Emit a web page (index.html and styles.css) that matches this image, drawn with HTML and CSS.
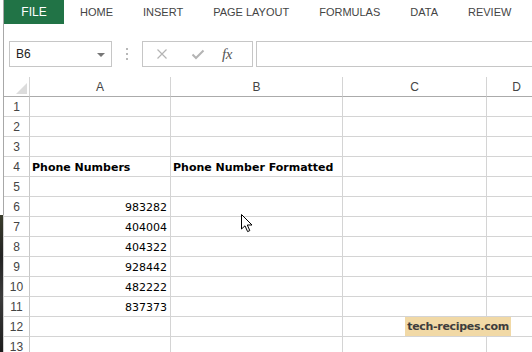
FILE: index.html
```html
<!DOCTYPE html>
<html>
<head>
<meta charset="utf-8">
<link rel="stylesheet" href="styles.css">
</head>
<body>
<div class="frame">
  <div class="edge"><div class="edge-top"></div><div class="edge-bottom"></div></div>
  <div class="app">
    <div class="tabs">
      <div class="tab file">FILE</div>
      <div class="tab t-home">HOME</div>
      <div class="tab">INSERT</div>
      <div class="tab">PAGE LAYOUT</div>
      <div class="tab">FORMULAS</div>
      <div class="tab">DATA</div>
      <div class="tab">REVIEW</div>
    </div>
    <div class="fbar">
      <div class="namebox"><span>B6</span><span class="caret"></span></div>
      <div class="dots"><i></i><i></i><i></i></div>
      <div class="btnbox">
        <svg class="ico" width="12" height="12" viewBox="0 0 12 12"><path d="M1.5 1.5 L10.5 10.5 M10.5 1.5 L1.5 10.5" stroke="#b4b4b4" stroke-width="1.2" fill="none"/></svg>
        <svg class="ico" width="14" height="12" viewBox="0 0 14 12"><path d="M1.5 6.5 L5 10 L12.5 2.5" stroke="#b4b4b4" stroke-width="2" fill="none"/></svg>
        <span class="fx">fx</span>
      </div>
      <div class="finput"></div>
    </div>
    <div class="grid">
      <div class="hd corner"><span class="tri"></span></div>
      <div class="hd col">A</div>
      <div class="hd col">B</div>
      <div class="hd col">C</div>
      <div class="hd col">D</div>

      <div class="rh">1</div><div class="c"></div><div class="c"></div><div class="c"></div><div class="c"></div>
      <div class="rh">2</div><div class="c"></div><div class="c"></div><div class="c"></div><div class="c"></div>
      <div class="rh">3</div><div class="c"></div><div class="c"></div><div class="c"></div><div class="c"></div>
      <div class="rh">4</div><div class="c b">Phone Numbers</div><div class="c b">Phone Number Formatted</div><div class="c"></div><div class="c"></div>
      <div class="rh">5</div><div class="c"></div><div class="c"></div><div class="c"></div><div class="c"></div>
      <div class="rh">6</div><div class="c n">983282</div><div class="c"></div><div class="c"></div><div class="c"></div>
      <div class="rh">7</div><div class="c n">404004</div><div class="c"></div><div class="c"></div><div class="c"></div>
      <div class="rh">8</div><div class="c n">404322</div><div class="c"></div><div class="c"></div><div class="c"></div>
      <div class="rh">9</div><div class="c n">928442</div><div class="c"></div><div class="c"></div><div class="c"></div>
      <div class="rh">10</div><div class="c n">482222</div><div class="c"></div><div class="c"></div><div class="c"></div>
      <div class="rh">11</div><div class="c n">837373</div><div class="c"></div><div class="c"></div><div class="c"></div>
      <div class="rh">12</div><div class="c"></div><div class="c"></div><div class="c"></div><div class="c"></div>
      <div class="rh">13</div><div class="c"></div><div class="c"></div><div class="c"></div><div class="c"></div>
    </div>
  </div>
</div>
<svg class="cursor" width="13" height="19" viewBox="0 0 13 19"><path d="M0.5 0.5 L0.5 15 L4 11.8 L6.6 17.6 L8.8 16.6 L6.3 11 L11 11 Z" fill="#fff" stroke="#000" stroke-width="1"/></svg>
<div class="watermark">tech-recipes.com</div>
</body>
</html>
```
FILE: styles.css
```css
html, body {
  margin: 0;
  padding: 0;
  background: #fff;
}
body {
  width: 532px;
  height: 352px;
  overflow: hidden;
  position: relative;
  font-family: "Liberation Sans", Arial, sans-serif;
  color: #444;
}
.frame {
  display: flex;
  height: 352px;
}
.edge {
  width: 4px;
  display: flex;
  flex-direction: column;
  flex: none;
}
.edge-top {
  height: 215px;
  box-sizing: border-box;
  border-right: 1px solid #a8a8a8;
}
.edge-bottom {
  flex: 1;
  background: linear-gradient(#3a3d2c, #222 30%, #3b3b3b 60%, #1c1c1c);
  border-right: 1px solid #cfcfcf;
}
.app {
  flex: 1;
  min-width: 0;
  overflow: hidden;
}
.tabs {
  display: flex;
  gap: 30px;
  height: 24px;
  align-items: stretch;
  font-size: 11px;
  color: #444;
}
.tab {
  display: flex;
  align-items: center;
  white-space: nowrap;
}
.file {
  width: 60px;
  justify-content: center;
  background: #217346;
  color: #fff;
  font-size: 12px;
}
.t-home { margin-left: -14px; }

.fbar {
  display: flex;
  align-items: stretch;
  padding: 17px 0 10px 5px;
  height: 26px;
}
.namebox {
  width: 103px;
  box-sizing: border-box;
  border: 1px solid #c6c6c6;
  display: flex;
  align-items: center;
  justify-content: space-between;
  padding: 0 6px 0 6px;
  font-size: 12px;
  color: #222;
}
.caret {
  width: 0;
  height: 0;
  border-left: 4px solid transparent;
  border-right: 4px solid transparent;
  border-top: 4px solid #777;
  margin-top: 1px;
}
.dots {
  width: 30px;
  display: flex;
  flex-direction: column;
  align-items: center;
  justify-content: center;
  gap: 3px;
}
.dots i {
  display: block;
  width: 2px;
  height: 2px;
  background: #b8b8b8;
}
.btnbox {
  width: 111px;
  box-sizing: border-box;
  border: 1px solid #c6c6c6;
  display: flex;
  align-items: center;
  padding: 0 0 0 13px;
}
.ico { display: block; flex: none; }
.btnbox .ico:nth-child(2) { margin-left: 23px; }
.fx {
  margin-left: 17px;
  font-family: "Liberation Serif", "Times New Roman", serif;
  font-style: italic;
  font-size: 15px;
  color: #555;
  letter-spacing: -0.5px;
}
.finput {
  flex: 1;
  margin-left: 3px;
  border: 1px solid #c6c6c6;
  border-right: none;
}

.grid {
  display: grid;
  grid-template-columns: 26px 141px 172px 144px 60px;
  grid-auto-rows: 20px;
  font-size: 12px;
}
.hd, .rh, .c {
  box-sizing: border-box;
  border-right: 1px solid #d4d4d4;
  border-bottom: 1px solid #d4d4d4;
  display: flex;
  align-items: center;
  white-space: nowrap;
  overflow: hidden;
}
.hd {
  border-bottom-color: #ababab;
  justify-content: center;
  color: #444;
}
.corner { position: relative; }
.tri {
  position: absolute;
  right: 2px;
  bottom: 2px;
  width: 0;
  height: 0;
  border-left: 11px solid transparent;
  border-bottom: 11px solid #dcdcdc;
}
.rh {
  justify-content: center;
  color: #444;
  border-right-color: #c8c8c8;
  padding-top: 1px;
}
.c {
  font-family: "DejaVu Sans", Verdana, sans-serif;
  font-size: 11px;
  color: #000;
  padding: 1px 3px 0 2px;
}
.b { font-weight: bold; overflow: visible; }
.n { justify-content: flex-end; }

.cursor {
  position: absolute;
  left: 241px;
  top: 214px;
}
.watermark {
  position: absolute;
  left: 405px;
  top: 317px;
  width: 106px;
  height: 19px;
  background: #f1d9a6;
  color: #3d3d3d;
  font-family: "DejaVu Sans", Verdana, sans-serif;
  font-weight: bold;
  font-size: 11px;
  display: flex;
  align-items: center;
  justify-content: center;
  letter-spacing: -0.3px;
}
```
